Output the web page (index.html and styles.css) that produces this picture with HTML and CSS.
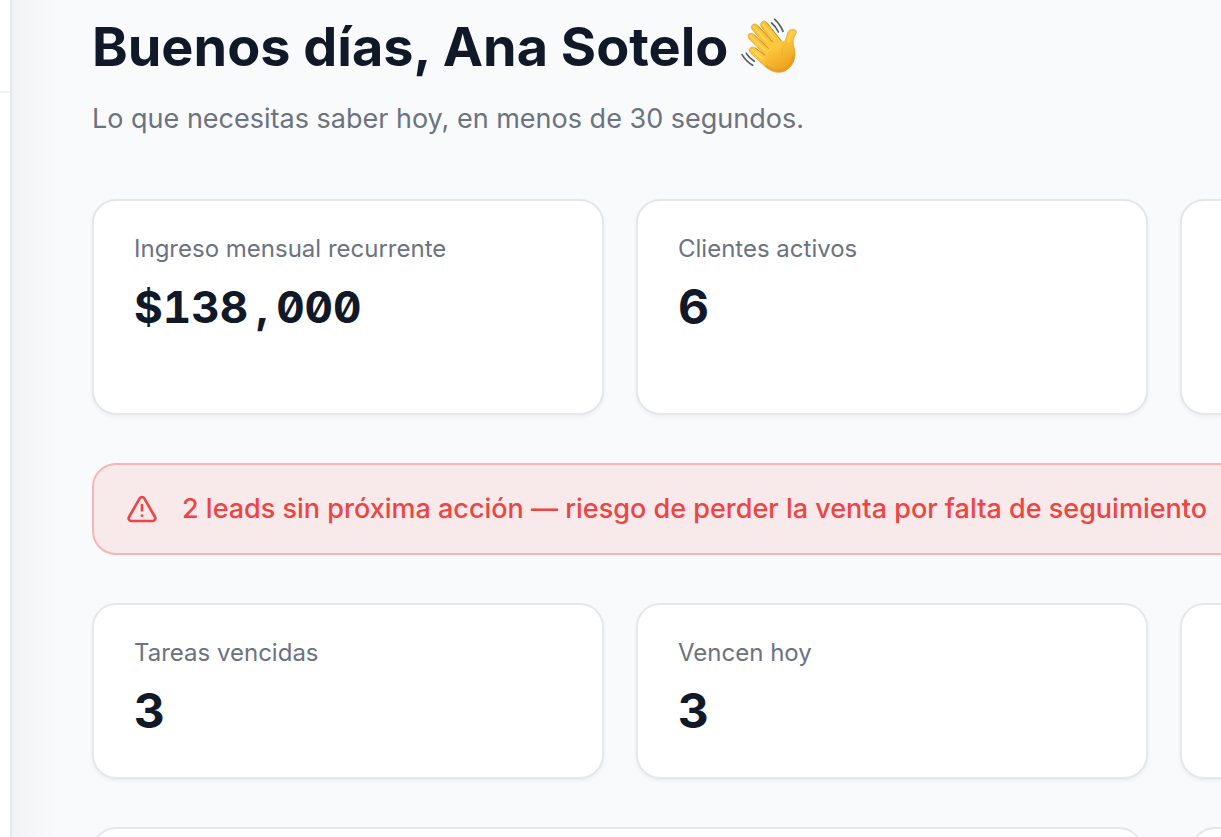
FILE: index.html
```html
<!DOCTYPE html>
<html lang="es">
<head>
    <meta charset="UTF-8">
    <meta name="viewport" content="width=device-width, initial-scale=1.0">
    <title>Inicio</title>
    <link rel="stylesheet" href="styles.css">
</head>
<body>
    <aside class="sidebar">
        <div class="sidebar-header"></div>
    </aside>

    <main class="content">
        <header class="page-header">
            <h1>
                Buenos días, Ana Sotelo
                <svg class="wave" viewBox="48 48 174 174" role="img" aria-label="Saludo">
                    <defs>
                        <linearGradient id="skin" x1="0" y1="0" x2="0.6" y2="1">
                            <stop offset="0" stop-color="#fbbd2c"/>
                            <stop offset="0.6" stop-color="#fdc93f"/>
                            <stop offset="1" stop-color="#eda420"/>
                        </linearGradient>
                    </defs>
                    <path fill="url(#skin)" stroke="#e09a22" stroke-width="2" d="M122 198 L80 160 C70 150 80 136 92 143 L122 164 L75 116 C67 105 78 94 89 103 L132 144 L84 88 C77 76 91 66 101 76 L145 126 L111 79 C106 66 119 59 128 67 L173 124 C179 130 184 123 186 115 L191 99 C195 86 209 86 216 92 C220 99 211 107 208 117 C204 132 214 143 213 165 C212 193 190 217 165 217 C147 217 135 209 122 198 Z"/>
                    <path fill="none" stroke="#d99020" stroke-width="3" stroke-linecap="round" d="M94 144 L122 165 M91 105 L133 145 M103 78 L146 126 M129 69 L172 123"/>
                    <path fill="none" stroke="#ffdc70" stroke-width="5" stroke-linecap="round" opacity="0.7" d="M84 149 L118 177 M80 108 L121 149 M89 80 L130 126 M116 73 L153 117 M202 97 L194 124"/>
                    <path fill="none" stroke="#eeb02d" stroke-width="3" stroke-linecap="round" d="M187 130 C173 142 171 152 176 164"/>
                    <path fill="none" stroke="#e29b1f" stroke-width="7" stroke-linecap="round" opacity="0.75" d="M128 199 C156 220 199 216 209 169"/>
                    <path fill="none" stroke="#535b66" stroke-width="5" stroke-linecap="round" d="M143 69 Q156 80 163 96 M152 58 Q169 73 177 94 M54 164 Q66 184 86 196 M67 160 Q76 175 91 184"/>
                </svg>
            </h1>
            <p>Lo que necesitas saber hoy, en menos de 30 segundos.</p>
        </header>

        <section class="stats stats-main">
            <article class="card">
                <h2>Ingreso mensual recurrente</h2>
                <p class="value money">$138<span class="separator">,</span>000</p>
            </article>
            <article class="card">
                <h2>Clientes activos</h2>
                <p class="value">6</p>
            </article>
            <article class="card"></article>
        </section>

        <a href="#leads" class="alert">
            <svg class="alert-icon" viewBox="0 0 24 24" aria-hidden="true">
                <path d="m21.73 18-8-14a2 2 0 0 0-3.48 0l-8 14A2 2 0 0 0 4 21h16a2 2 0 0 0 1.73-3"/>
                <path d="M12 9v4"/>
                <path d="M12 17h.01"/>
            </svg>
            <span>2 leads sin próxima acción — riesgo de perder la venta por falta de seguimiento</span>
        </a>

        <section class="stats">
            <article class="card">
                <h2>Tareas vencidas</h2>
                <p class="value">3</p>
            </article>
            <article class="card">
                <h2>Vencen hoy</h2>
                <p class="value">3</p>
            </article>
            <article class="card"></article>
        </section>

        <section class="panels" id="leads">
            <article class="card panel-wide"></article>
            <article class="card"></article>
        </section>
    </main>
</body>
</html>
```

FILE: styles.css
```css
* {
    box-sizing: border-box;
}
body {
    display: flex;
    height: 100vh;
    margin: 0;
    overflow: hidden;
    background-color: #f9fafc;
    color: #111827;
    font-family: Inter, "Liberation Sans", sans-serif;
}
h1, h2, p {
    margin: 0;
}

/* Sidebar */
.sidebar {
    flex: 0 0 12px;
    background-color: white;
    border-right: 2px solid #e5e7eb;
}
.sidebar-header {
    height: 93px;
    border-bottom: 2px solid #f0f1f3;
}

/* Main column */
.content {
    flex: 1 0 1760px;
    display: flex;
    flex-direction: column;
    gap: 48px;
    padding: 11px 80px;
    background: linear-gradient(to right, #f1f2f4, #f9fafc 44px);
}
.page-header {
    margin-bottom: 12px;
}
h1 {
    display: flex;
    align-items: center;
    gap: 12px;
    font-size: 54px;
    line-height: 72px;
    font-weight: 700;
}
.wave {
    width: 58px;
    height: 58px;
    margin-bottom: 4px;
}
.page-header p {
    margin-top: 16px;
    color: #6b7280;
    font-size: 27px;
    line-height: 40px;
}

/* Cards */
.stats, .panels {
    display: grid;
    grid-template-columns: repeat(3, 1fr);
    gap: 32px;
}
.stats-main {
    grid-auto-rows: 216px;
}
.card {
    min-height: 176px;
    padding: 32px 40px;
    background-color: white;
    border: 2px solid #e5e7eb;
    border-radius: 24px;
    box-shadow: 0 2px 4px rgba(0, 0, 0, 0.05);
}
.card h2 {
    color: #6b7280;
    font-size: 24px;
    line-height: 32px;
    font-weight: 400;
}
.value {
    margin-top: 8px;
    font-size: 48px;
    line-height: 68px;
    font-weight: 700;
    font-feature-settings: "tnum", "zero";
}
.money {
    font-size: 44px;
}
/* the comma takes as much room as a digit */
.separator {
    display: inline-block;
    width: 28px;
    text-align: center;
}
.panels {
    gap: 48px;
}
.panel-wide {
    grid-column: span 2;
}

/* Alert */
.alert {
    display: flex;
    align-items: center;
    gap: 24px;
    padding: 24px 32px;
    background-color: #f8eaea;
    border: 2px solid #f8b4b4;
    border-radius: 24px;
    color: #ef4444;
    font-size: 27px;
    line-height: 40px;
    font-weight: 500;
    text-decoration: none;
    white-space: nowrap;
}
.alert-icon {
    width: 32px;
    height: 32px;
    fill: none;
    stroke: currentColor;
    stroke-width: 2;
    stroke-linecap: round;
    stroke-linejoin: round;
}
```
